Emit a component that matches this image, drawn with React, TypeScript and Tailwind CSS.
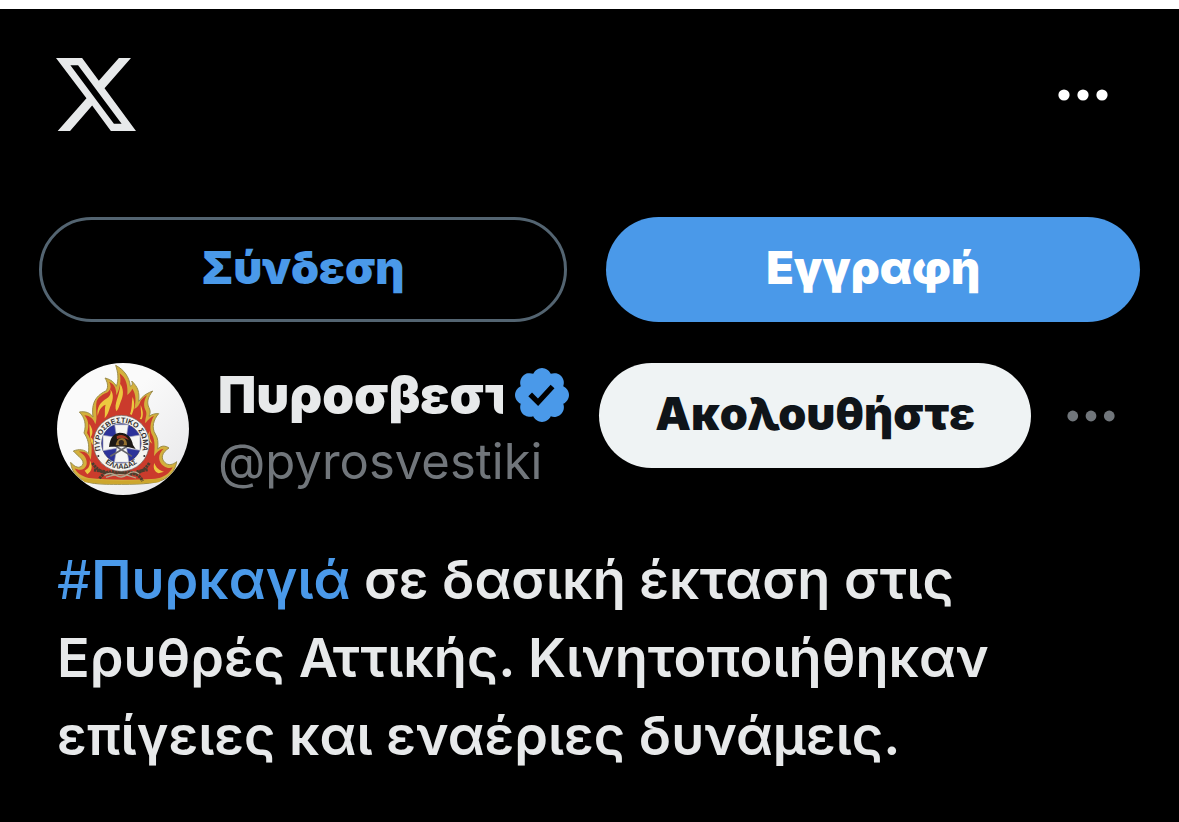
import React from 'react';

/* ++++++++++ ICONS ++++++++++ */
const XLogo: React.FC = () => (
  <svg viewBox="49 175 239 218" preserveAspectRatio="none" className="h-[73px] w-20 fill-[#e7e9ea]" aria-hidden="true">
    <path
      fillRule="evenodd"
      d="M49 175H127L177 243L237 175H273L194 265L288 393H213L157 317L91 393H54L140 295ZM92 197L222 371H245L115 197Z"
    />
  </svg>
);

const Dots: React.FC<{ className: string }> = ({ className }) => (
  <svg viewBox="0 0 50 12" className={className} aria-hidden="true">
    <circle cx="6" cy="6" r="5.6" />
    <circle cx="25" cy="6" r="5.6" />
    <circle cx="44" cy="6" r="5.6" />
  </svg>
);

const VerifiedBadge: React.FC = () => (
  <svg viewBox="1.604 1.604 18.792 18.792" className="size-[54px] shrink-0 fill-[#4a99e9]" aria-hidden="true">
    <path d="M20.396 11c-.018-.646-.215-1.275-.57-1.816-.354-.54-.852-.972-1.438-1.246.223-.607.27-1.264.14-1.897-.131-.634-.437-1.218-.882-1.687-.47-.445-1.053-.75-1.687-.882-.633-.13-1.29-.083-1.897.14-.273-.587-.704-1.086-1.245-1.44S11.647 1.62 11 1.604c-.646.017-1.273.213-1.813.568s-.969.854-1.24 1.44c-.608-.223-1.267-.272-1.902-.14-.635.13-1.22.436-1.69.882-.445.47-.749 1.055-.878 1.688-.13.633-.08 1.29.144 1.896-.587.274-1.087.705-1.443 1.245-.356.54-.555 1.17-.574 1.817.02.647.218 1.276.574 1.817.356.54.856.972 1.443 1.245-.224.606-.274 1.263-.144 1.896.13.634.433 1.218.877 1.688.47.443 1.054.747 1.687.878.633.132 1.29.084 1.897-.136.274.586.705 1.084 1.246 1.439.54.354 1.17.551 1.816.569.647-.016 1.276-.213 1.817-.567s.972-.854 1.245-1.44c.604.239 1.266.296 1.903.164.636-.132 1.22-.447 1.68-.907.46-.46.776-1.044.908-1.681s.075-1.299-.165-1.903c.586-.274 1.084-.705 1.439-1.246.354-.54.551-1.17.569-1.816zM9.662 14.85l-3.429-3.428 1.293-1.302 2.072 2.072 4.4-4.794 1.347 1.246z" />
  </svg>
);

/* Fire service emblem: flames, ring with lettering, cross and helmet */
const Emblem: React.FC = () => (
  <svg viewBox="21 24 396 396" className="size-[132px] rounded-full" aria-hidden="true">
    <defs>
      <linearGradient id="paper" x1="0" y1="0" x2="1" y2="1">
        <stop offset="0.4" stopColor="#fafafa" />
        <stop offset="1" stopColor="#e6e6e8" />
      </linearGradient>
      <path id="arc-top" d="M151 284A65 65 0 1 1 277 284" />
      <path id="arc-bottom" d="M162 321A75 75 0 0 0 265 321" />
    </defs>
    <rect x="21" y="24" width="396" height="396" fill="url(#paper)" />
    {/* flames */}
    <path
      d="M62 322C76 338 88 341 97 331C107 316 83 303 70 288C87 281 105 283 115 296C119 267 113 250 102 234C110 208 104 187 88 171C108 168 121 174 129 186C125 153 130 125 169 107C176 94 172 80 165 69C184 74 194 83 199 94C207 74 204 52 197 31C222 44 238 66 241 94C249 91 247 84 245 78C264 96 269 111 266 139C277 127 279 120 308 108C292 128 290 144 297 158C302 168 301 175 297 184C306 178 315 175 326 176C310 194 304 218 316 237C324 249 325 263 323 282C335 270 346 272 357 279C337 292 330 309 345 323C356 333 369 329 380 320C377 342 364 359 348 369C327 385 282 388 214 388C146 388 110 388 86 367C71 355 64 341 62 322Z"
      fill="#d3b03c"
      stroke="#9b8d4c"
      strokeWidth="3"
    />
    <path
      d="M74 340C91 350 108 342 110 327C112 310 102 298 87 290C108 288 117 299 122 314C128 283 126 254 111 234C119 210 114 192 103 181C121 182 131 193 136 208C144 190 135 160 140 139C145 126 158 118 174 111C186 99 182 88 177 80C196 88 199 105 199 121C211 99 214 76 209 55C229 69 234 93 232 120C238 115 243 109 247 101C259 118 258 140 253 162C264 157 269 147 272 137C278 130 284 124 291 121C280 139 280 154 288 169C292 181 284 193 286 205C294 194 302 186 312 182C300 203 298 223 307 241C315 257 315 278 312 304C319 291 329 283 341 281C321 299 325 321 341 333C352 341 361 340 368 337C359 356 340 369 316 371C252 375 174 376 116 369C94 364 81 354 74 340Z"
      fill="#cb3b2c"
    />
    <path
      d="M143 183C139 158 151 141 171 130C183 121 183 113 181 103C194 120 188 139 180 157C176 171 172 181 164 190C166 172 163 161 167 149C151 155 147 168 143 183ZM199 169C190 145 209 126 211 86C226 111 216 130 211 143C207 154 206 161 199 169ZM240 177C247 160 244 145 248 126C255 145 254 160 245 180ZM269 192C277 183 272 173 272 150C279 166 281 180 275 193ZM118 207C129 222 130 235 122 247C130 252 132 262 128 270C119 255 120 241 118 207ZM301 225C295 239 300 254 307 266C298 261 293 252 293 241ZM104 347C119 340 121 326 119 316C130 333 125 350 112 358ZM326 355C311 349 309 336 313 324C318 339 329 347 342 350Z"
      fill="#ecc83f"
    />
    <path d="M91 369Q210 387 340 370L326 382Q212 391 105 382Z" fill="#cda62d" />
    {/* laurel branches */}
    <g fill="none" stroke="#4c3d2e" strokeWidth="9" strokeDasharray="7 2">
      <path d="M127 324Q156 366 207 354T278 378" />
      <path d="M298 324Q270 368 218 354T148 372" />
      <path d="M132 345L165 350M293 344L260 350" />
    </g>
    {/* ring */}
    <circle cx="214" cy="265" r="84" fill="#f4f3ef" stroke="#6d625b" strokeWidth="2" />
    <circle cx="214" cy="265" r="59" fill="#2c329a" stroke="#25265e" strokeWidth="2" />
    <path
      d="M194 209H235L229 247L270 240V286L230 280L237 322H193L200 280L159 287V241L200 247Z"
      fill="#f6f6f5"
      stroke="#9b9eba"
      strokeWidth="2"
    />
    <path d="M181 304L244 267M246 304L187 267" stroke="#666569" strokeWidth="5" />
    {/* ribbon under the ring */}
    <g fill="none" stroke="#b3a78d" strokeWidth="4">
      <path d="M163 361Q180 350 198 361T233 358T267 357" />
      <path d="M168 367Q210 350 258 369" />
    </g>
    {/* helmet */}
    <path d="M177 276C180 249 190 235 209 233C232 233 245 247 249 270L257 282C237 273 197 273 177 276Z" fill="#1d1916" />
    <path d="M200 244C216 235 229 242 237 256C222 247 210 248 201 253Z" fill="#a83b25" />
    <path d="M197 271C200 258 205 249 216 249C229 250 231 262 231 271Z" fill="#967130" />
    <circle cx="214" cy="263" r="8" fill="#302520" />
    <g fill="#33302f" fontFamily="'Liberation Sans', sans-serif" fontSize="22" fontWeight="700">
      <text>
        <textPath href="#arc-top" startOffset="50%" textAnchor="middle">ΠΥΡΟΣΒΕΣΤΙΚΟ ΣΩΜΑ</textPath>
      </text>
      <text>
        <textPath href="#arc-bottom" startOffset="50%" textAnchor="middle">ΕΛΛΑΔΑΣ</textPath>
      </text>
    </g>
    <circle cx="145" cy="303" r="3" fill="#33302f" />
    <circle cx="283" cy="303" r="3" fill="#33302f" />
  </svg>
);

/* ++++++++++ SECTIONS ++++++++++ */
const Header: React.FC = () => (
  <header className="flex items-center justify-between pt-[49px] pr-[71px] pl-14">
    <a href="#home" aria-label="X">
      <XLogo />
    </a>
    <button type="button" aria-label="Μενού">
      <Dots className="h-3 w-[50px] fill-white" />
    </button>
  </header>
);

const AuthButtons: React.FC = () => (
  <div className="mt-[86px] flex gap-[39px] px-[39px] text-[45px] font-black">
    <button type="button" className="h-[105px] flex-auto rounded-full border-3 border-[#536471] pb-1 text-[#4a99e9]">
      Σύνδεση
    </button>
    <button type="button" className="h-[105px] flex-auto rounded-full bg-[#4a99e9] pb-1 text-white">
      Εγγραφή
    </button>
  </div>
);

const Author: React.FC = () => (
  <div className="mt-[41px] flex items-start pr-16 pl-[57px]">
    <Emblem />
    <div className="ml-[29px] min-w-0 flex-1">
      <div className="flex items-center gap-3">
        <span className="w-[285px] overflow-hidden text-[51px] leading-[64px] font-black whitespace-nowrap">
          Πυροσβεστικό
        </span>
        <VerifiedBadge />
      </div>
      <div className="text-[49px] leading-[70px] text-[#71767b]">@pyrosvestiki</div>
    </div>
    <button type="button" className="h-[105px] shrink-0 rounded-full bg-[#eff3f4] px-14 pb-1 text-[45px] font-black text-[#0f1419]">
      Ακολουθήστε
    </button>
    <button type="button" aria-label="Περισσότερα" className="ml-9 flex h-[105px] shrink-0 items-center">
      <Dots className="h-3 w-12 fill-[#71767b]" />
    </button>
  </div>
);

const App: React.FC = () => {
  return (
    <main className="min-h-screen border-t-9 border-white bg-black font-['Inter','Noto_Sans',sans-serif] text-[#e7e9ea]">
      <Header />
      <AuthButtons />
      <Author />
      <p className="mt-11 px-[57px] text-[54px] leading-[78px] font-semibold">
        <a href="#fire" className="text-[#4a99e9]">
          <span className="font-normal">#</span>Πυρκαγιά
        </a>{' '}
        σε δασική έκταση στις Ερυθρές Αττικής. Κινητοποιήθηκαν επίγειες και εναέριες δυνάμεις.
      </p>
    </main>
  );
};

export default App;
